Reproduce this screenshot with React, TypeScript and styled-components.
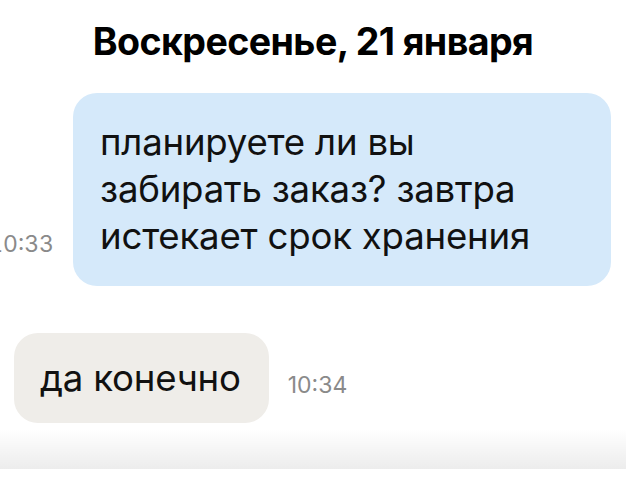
import React from "react";
import styled, { createGlobalStyle } from "styled-components";

const Global = createGlobalStyle`
  html, body { margin: 0; padding: 0; background: #ffffff; }
  body { font-family: Inter, "Noto Sans", "Liberation Sans", sans-serif; }
`;

const Screen = styled.div`
  width: 626px;
  height: 497px;
  overflow: hidden;
  display: flex;
  flex-direction: column;
  background: #ffffff;
`;

const Feed = styled.div`
  flex: 1;
  display: flex;
  flex-direction: column;
  min-height: 0;
  overflow: hidden;
`;

const DateTitle = styled.h2`
  flex-shrink: 0;
  margin: 0;
  padding-top: 20px;
  height: 93px;
  box-sizing: border-box;
  text-align: center;
  font-size: 37.6px;
  line-height: 44px;
  font-weight: 700;
  letter-spacing: -0.6px;
  color: #000000;
`;

const Row = styled.div<{ $out?: boolean }>`
  flex-shrink: 0;
  display: flex;
  align-items: flex-end;
  justify-content: ${(p) => (p.$out ? "flex-end" : "flex-start")};
  gap: ${(p) => (p.$out ? "19px" : "19px")};
  padding: ${(p) => (p.$out ? "0 15px 0 0" : "0 0 0 14px")};
  margin-bottom: 47px;
`;

const Bubble = styled.div<{ $out?: boolean }>`
  flex-shrink: 0;
  box-sizing: border-box;
  background: ${(p) => (p.$out ? "#d5e9fa" : "#efede9")};
  border-radius: 24px;
  padding: ${(p) => (p.$out ? "26px 81px 26px 27px" : "22px 28px 21px 26px")};
  font-size: 36.6px;
  line-height: 47px;
  font-weight: 400;
  color: #111111;
  white-space: pre-line;
  letter-spacing: -0.2px;
`;

const Time = styled.span<{ $out?: boolean }>`
  flex-shrink: 0;
  font-size: 23px;
  line-height: 28px;
  color: #8a8a8a;
  font-variant-numeric: ${(p) => (p.$out ? "tabular-nums" : "normal")};
  margin-bottom: ${(p) => (p.$out ? "28px" : "24px")};
`;

const Shade = styled.div`
  height: 40px;
  flex-shrink: 0;
  background: linear-gradient(to bottom, rgba(0, 0, 0, 0) 0%, rgba(0, 0, 0, 0.075) 100%);
`;

const Panel = styled.div`
  height: 28px;
  flex-shrink: 0;
  background: #ffffff;
`;

type Msg = { text: string; time: string; out: boolean };

const messages: Msg[] = [
  {
    text: "планируете ли вы\nзабирать заказ? завтра\nистекает срок хранения",
    time: "10:33",
    out: true,
  },
  { text: "да конечно", time: "10:34", out: false },
];

export default function App() {
  return (
    <>
      <Global />
      <Screen>
        <Feed>
          <DateTitle>Воскресенье, 21 января</DateTitle>
          {messages.map((m, i) =>
            m.out ? (
              <Row key={i} $out>
                <Time $out>{m.time}</Time>
                <Bubble $out>{m.text}</Bubble>
              </Row>
            ) : (
              <Row key={i}>
                <Bubble>{m.text}</Bubble>
                <Time>{m.time}</Time>
              </Row>
            )
          )}
        </Feed>
        <Shade />
        <Panel />
      </Screen>
    </>
  );
}
